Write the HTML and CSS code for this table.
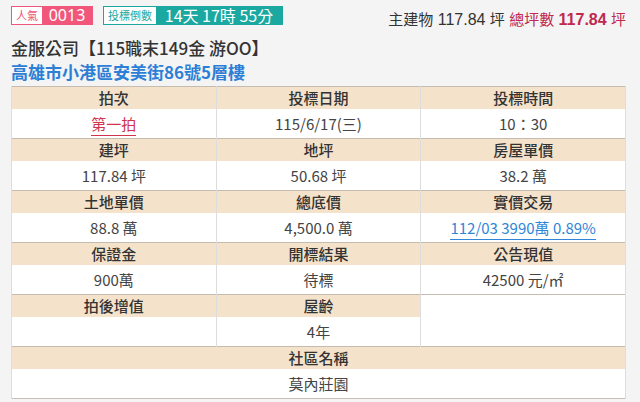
FILE: index.html
```html
<!DOCTYPE html>
<html lang="zh-Hant">
<head>
<meta charset="utf-8">
<link rel="stylesheet" href="styles.css">
</head>
<body>
<div class="page">
  <div class="topbar">
    <div class="badges">
      <span class="badge pink"><span class="lbl">人氣</span><span class="val">0013</span></span>
      <span class="badge teal"><span class="lbl">投標倒數</span><span class="val">14天 17時 55分</span></span>
    </div>
    <div class="area">主建物 <b class="num">117.84</b> 坪 <span class="total">總坪數 <b>117.84</b> 坪</span></div>
  </div>
  <div class="title">金服公司【115職末149金 游OO】</div>
  <div class="addr">高雄市小港區安美街86號5層樓</div>
  <table class="info">
    <tr class="hd"><th>拍次</th><th>投標日期</th><th>投標時間</th></tr>
    <tr class="dt"><td><span class="red">第一拍</span></td><td>115/6/17(三)</td><td>10：30</td></tr>
    <tr class="hd"><th>建坪</th><th>地坪</th><th>房屋單價</th></tr>
    <tr class="dt"><td>117.84 坪</td><td>50.68 坪</td><td>38.2 萬</td></tr>
    <tr class="hd"><th>土地單價</th><th>總底價</th><th>實價交易</th></tr>
    <tr class="dt"><td>88.8 萬</td><td>4,500.0 萬</td><td><span class="link">112/03 3990萬 0.89%</span></td></tr>
    <tr class="hd"><th>保證金</th><th>開標結果</th><th>公告現值</th></tr>
    <tr class="dt"><td>900萬</td><td>待標</td><td>42500 元/㎡</td></tr>
    <tr class="hd"><th>拍後增值</th><th>屋齡</th><td class="blank" rowspan="2"></td></tr>
    <tr class="dt"><td></td><td>4年</td></tr>
    <tr class="hd"><th colspan="3">社區名稱</th></tr>
    <tr class="dt"><td colspan="3">莫內莊園</td></tr>
  </table>
</div>
</body>
</html>
```
FILE: styles.css
```css
html, body {
  margin: 0;
  padding: 0;
  background: #f4f4f4;
}
body {
  font-family: "Noto Sans CJK TC", "Noto Sans", sans-serif;
  color: #333;
}
.page {
  width: 615px;
  padding: 6px 0 0 11px;
}
.topbar {
  display: flex;
  justify-content: space-between;
  align-items: center;
  height: 19px;
}
.badges {
  display: flex;
  gap: 10px;
}
.badge {
  display: flex;
  height: 19px;
  box-sizing: border-box;
  border: 1px solid;
  line-height: 17px;
  white-space: nowrap;
}
.badge .lbl {
  background: #fff;
  font-size: 11px;
  padding: 0 4px;
}
.badge .val {
  color: #fff;
  font-size: 16px;
  text-align: center;
  font-family: "Noto Sans", "Noto Sans CJK TC", sans-serif;
}
.pink { border-color: #f0577a; }
.pink .lbl { color: #f0577a; }
.pink .val { background: #f0577a; width: 50px; }
.teal { border-color: #1aa8a0; }
.teal .lbl { color: #1aa8a0; }
.teal .val { background: #1aa8a0; width: 126px; font-family: "Noto Sans CJK TC", sans-serif; }
.area {
  font-size: 15px;
  color: #333;
  margin-top: 6px;
  font-family: "Noto Sans CJK TC", sans-serif;
  white-space: nowrap;
  word-spacing: 1px;
}
.area b { font-weight: 500; font-family: "Liberation Sans", sans-serif; font-size: 16px; }
.total { color: #c0284e; }
.total b { font-weight: 700; }
.title {
  font-size: 17px;
  font-weight: 500;
  margin-top: 12px;
  line-height: 22px;
  color: #333;
}
.addr {
  font-size: 17px;
  font-weight: 700;
  color: #2d7fd6;
  line-height: 22px;
  margin-top: 2px;
}
.info {
  margin-top: 3px;
  width: 615px;
  border-collapse: collapse;
  table-layout: fixed;
  background: #fff;
  border: 1px solid #c6bfb4;
  font-size: 15px;
}
.info th, .info td {
  text-align: center;
  padding: 0;
  border-left: 1px solid #ddd;
  border-right: 1px solid #ddd;
}
.info th {
  font-weight: 500;
  color: #333;
}
.hd { background: #f4e2cb; height: 22px; border-top: 1px solid #c4bcae; }
.hd th { line-height: 21px; }
.dt { height: 30px; }
.dt td { color: #444; line-height: 29px; }
.hd td.blank { background: #fff; }
.red { color: #d0334a; border-bottom: 1px solid #d0334a; padding-bottom: 1px; }
.link { color: #2f86d8; border-bottom: 1px solid #2f86d8; padding-bottom: 1px; }
```
